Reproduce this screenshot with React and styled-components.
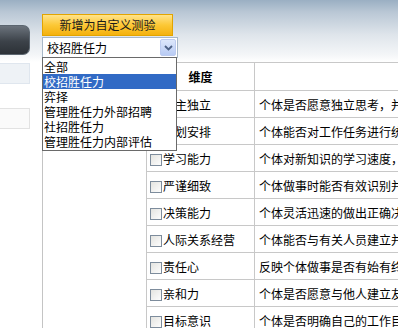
import React, { useState } from 'react'
import styled, { createGlobalStyle } from 'styled-components'

const GlobalStyle = createGlobalStyle`
    html, body {
        margin: 0;
        padding: 0;
        background: #fff;
        overflow: hidden;
    }
    body {
        font-family: "Noto Sans CJK SC", "Liberation Sans", sans-serif;
        font-size: 12px;
        color: #000;
    }
`;

const options = [
    "全部",
    "校招胜任力",
    "弈择",
    "管理胜任力外部招聘",
    "社招胜任力",
    "管理胜任力内部评估",
];

const rows = [
    { name: "自主独立", desc: "个体是否愿意独立思考，并能够独立完成工作任务" },
    { name: "计划安排", desc: "个体能否对工作任务进行统筹规划和合理安排" },
    { name: "学习能力", desc: "个体对新知识的学习速度，以及学以致用的能力" },
    { name: "严谨细致", desc: "个体做事时能否有效识别并关注细节问题" },
    { name: "决策能力", desc: "个体灵活迅速的做出正确决定的能力" },
    { name: "人际关系经营", desc: "个体能否与有关人员建立并维护良好的关系" },
    { name: "责任心", desc: "反映个体做事是否有始有终，勇于承担责任" },
    { name: "亲和力", desc: "个体是否愿意与他人建立友好的关系" },
    { name: "目标意识", desc: "个体是否明确自己的工作目标并为之努力" },
];

function App() {
    const [selected, setSelected] = useState(1);
    return (
        <Page>
            <GlobalStyle />
            <Sidebar>
                <DarkTab />
                <SideItem $active />
                <SideItem />
            </Sidebar>
            <Main>
                <AddButton>新增为自定义测验</AddButton>
                <SelectBox>
                    <SelectText>{options[selected]}</SelectText>
                    <ArrowButton>
                        <svg width="9" height="6" viewBox="0 0 9 6">
                            <path d="M1 1 L4.5 4.5 L8 1" fill="none" stroke="#4d6185" strokeWidth="1.8" />
                        </svg>
                    </ArrowButton>
                </SelectBox>
                <DropList>
                    {options.map((o, i) => (
                        <DropItem key={o} $active={i === selected} onClick={() => setSelected(i)}>{o}</DropItem>
                    ))}
                </DropList>
                <Content>
                    <Table>
                        <thead>
                            <tr>
                                <HeadCell $w={107}>维度</HeadCell>
                                <HeadCell></HeadCell>
                            </tr>
                        </thead>
                        <tbody>
                            {rows.map(r => (
                                <tr key={r.name}>
                                    <NameCell>
                                        <Check />{r.name}
                                    </NameCell>
                                    <DescCell>{r.desc}</DescCell>
                                </tr>
                            ))}
                        </tbody>
                    </Table>
                </Content>
            </Main>
        </Page>
    )
}

const Page = styled.div`
    display: flex;
    width: 398px;
    height: 328px;
    overflow: hidden;
    background: linear-gradient(#9aafc3 0px, #b9c7d5 12px, #dfe5eb 35px, #f4f6f8 55px, #fff 62px);
`;
const Sidebar = styled.div`
    width: 42px;
    flex-shrink: 0;
    padding-top: 25px;
    display: flex;
    flex-direction: column;
`;
const DarkTab = styled.div`
    width: 30px;
    height: 30px;
    border-radius: 0 7px 7px 0;
    background: linear-gradient(#6b737c, #3c4249 55%, #2c3137);
    border: 1px solid #5c6670;
    border-left: none;
    box-sizing: border-box;
`;
const SideItem = styled.div`
    width: 30px;
    height: 21px;
    margin-top: ${p => p.$active ? '8px' : '24px'};
    box-sizing: border-box;
    border: 1px solid ${p => p.$active ? '#dfe6ee' : '#e2e2e2'};
    border-left: none;
    background: ${p => p.$active ? '#eef2f6' : '#fafafa'};
`;
const Main = styled.div`
    flex: 1;
    position: relative;
    padding-top: 14px;
    display: flex;
    flex-direction: column;
    min-width: 0;
`;
const AddButton = styled.div`
    width: 131px;
    height: 22px;
    box-sizing: border-box;
    border: 1px solid #e2a400;
    background: linear-gradient(#ffe38a, #fcc836 50%, #f4b10e);
    text-align: center;
    line-height: 20px;
    font-size: 12px;
    color: #1a1a1a;
`;
const SelectBox = styled.div`
    width: 136px;
    height: 21px;
    margin-top: 1px;
    box-sizing: border-box;
    border: 1px solid #a8b8c8;
    background: #fff;
    display: flex;
    align-items: center;
    padding: 0 1px 0 4px;
`;
const SelectText = styled.span`
    flex: 1;
    font-size: 12px;
    line-height: 17px;
`;
const ArrowButton = styled.span`
    width: 16px;
    height: 17px;
    box-sizing: border-box;
    border: 1px solid #bccbf0;
    border-radius: 2px;
    background: linear-gradient(#dde7fb, #b8cbf4);
    display: flex;
    align-items: center;
    justify-content: center;
`;
const DropList = styled.div`
    position: absolute;
    left: 0;
    top: 57px;
    width: 135px;
    box-sizing: border-box;
    border: 1px solid #6a6a6a;
    background: #fff;
    padding: 1px 0;
    z-index: 2;
`;
const DropItem = styled.div`
    height: 15px;
    line-height: 15px;
    font-size: 12px;
    padding-left: 1px;
    background: ${p => p.$active ? '#316ac5' : 'transparent'};
    color: ${p => p.$active ? '#fff' : '#000'};
    white-space: nowrap;
`;
const Content = styled.div`
    flex: 1;
    border-left: 1px solid #c4c4c4;
    padding: 4px 0 0 103px;
    overflow: hidden;
`;
const Table = styled.table`
    border-collapse: collapse;
    table-layout: fixed;
    width: 560px;
    background: #fff;
`;
const HeadCell = styled.th`
    width: ${p => p.$w ? p.$w + 'px' : 'auto'};
    height: 27px;
    border: 1px solid #c8c8c8;
    font-weight: bold;
    font-size: 12px;
    text-align: center;
    padding: 0;
`;
const NameCell = styled.td`
    height: 26px;
    border: 1px solid #c8c8c8;
    padding: 0 0 0 3px;
    white-space: nowrap;
    font-size: 12px;
`;
const Check = styled.span`
    display: inline-block;
    width: 12px;
    height: 12px;
    box-sizing: border-box;
    border: 1px solid #7d8c9c;
    background: linear-gradient(135deg, #e4e4e0, #fdfdfd);
    vertical-align: -2px;
    margin-right: 1px;
`;
const DescCell = styled.td`
    border: 1px solid #c8c8c8;
    padding: 0 0 0 4px;
    white-space: nowrap;
    overflow: hidden;
    font-size: 12px;
`;

export default App;
